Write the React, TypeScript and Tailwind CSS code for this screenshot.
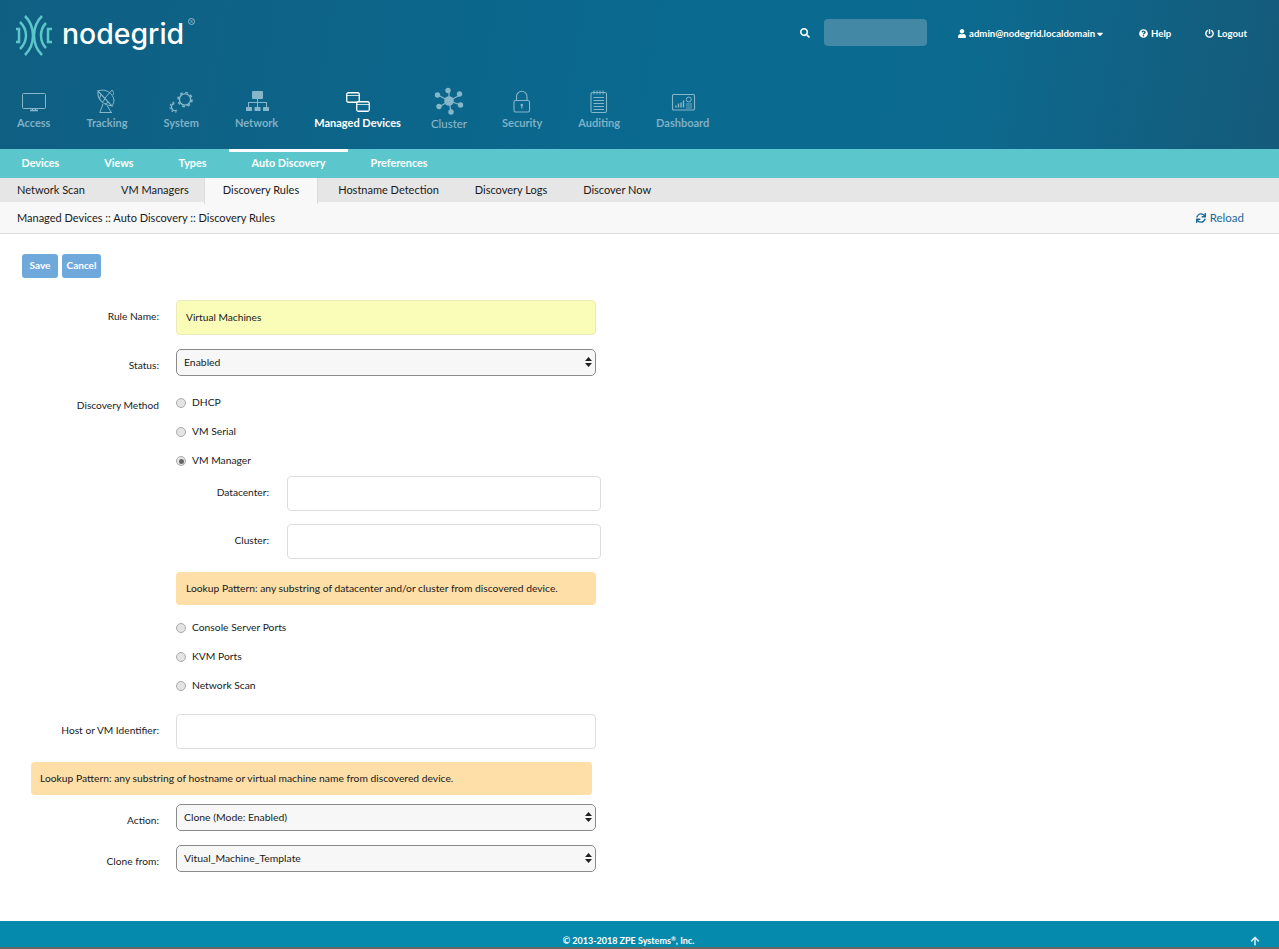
import { FaSearch, FaUser, FaQuestionCircle, FaPowerOff, FaCaretDown, FaSync, FaArrowUp } from 'react-icons/fa'

const navStroke = '#86b6c9'

function NavIcon({ name, active }: { name: string; active?: boolean }) {
  const c = active ? '#ffffff' : navStroke
  return (
    <svg width="30" height="28" viewBox="0 0 30 28" fill="none" stroke={c} strokeWidth="1">
      {name === 'Access' && (
        <>
          <rect x="3.5" y="6.5" width="23" height="15" rx="1" />
          <path d="M11 23.500h8M13.500 22v1M16.500 22v1" strokeWidth="1.400" />
        </>
      )}
      {name === 'Tracking' && (
        <>
          <path d="M6 4c-1 7 4 14 14 15L6 4z" strokeWidth="1.100" />
          <path d="M9 7.500l-1.500 4M13 12l-2.500 3M16 15.500l-3 1.500M13 11l7-8M20 3c1.500 1.500 2 3 1 5" />
          <path d="M6 4c7-3 15 2 16 9 0 3-2 6-2 6" />
          <path d="M11 17l-3 8M15 18.500l4 6.500M7.500 25.500h12.500" />
        </>
      )}
      {name === 'System' && (
        <>
          <circle cx="19" cy="12.500" r="5.600" strokeWidth="1.400" />
          <circle cx="19" cy="12.500" r="7" strokeWidth="1.600" strokeDasharray="2.800 2.700" />
          <circle cx="9" cy="20" r="3.500" strokeWidth="1.500" strokeDasharray="12 10" transform="rotate(60 9 20)" />
          <circle cx="9" cy="20" r="5" strokeWidth="1.200" strokeDasharray="1.800 1.800 1.800 1.800 1.800 1.800 1.800 1.800 1.800 20" transform="rotate(70 9 20)" />
        </>
      )}
      {name === 'Network' && (
        <g stroke="none" fill={c}>
          <rect x="10" y="4" width="11" height="8" rx="1" />
          <rect x="4" y="20" width="6" height="4" rx="0.500" />
          <rect x="12.500" y="20" width="6" height="4" rx="0.500" />
          <rect x="21" y="20" width="6" height="4" rx="0.500" />
          <path d="M15 12h1v3h9v5h-1v-4h-8v4h-1v-4H7v4H6v-5h9z" />
        </g>
      )}
      {name === 'Managed Devices' && (
        <>
          <rect x="3.750" y="5.750" width="12.500" height="9.500" rx="1.500" strokeWidth="1.300" />
          <path d="M3.750 8.500h12.500" strokeWidth="0.800" />
          <rect x="13.750" y="14.750" width="12.500" height="9.500" rx="1.500" strokeWidth="1.300" fill="#0c6a90" />
          <path d="M13.750 17.500h12.500" strokeWidth="0.800" />
        </>
      )}
      {name === 'Cluster' && (
        <g fill={c} stroke={c}>
          <path d="M15 14L15 3M15 14L26 8M15 14L27 18M15 14L17 25M15 14L5 20M15 14L4 8" strokeWidth="1.300" />
          <circle cx="15" cy="14" r="4.800" stroke="none" />
          <circle cx="14" cy="3.500" r="2.700" stroke="none" />
          <circle cx="25.500" cy="7" r="2.700" stroke="none" />
          <circle cx="26.500" cy="18" r="2.700" stroke="none" />
          <circle cx="17" cy="25" r="2.700" stroke="none" />
          <circle cx="5" cy="19.500" r="2.700" stroke="none" />
          <circle cx="3.500" cy="8" r="2.700" stroke="none" />
        </g>
      )}
      {name === 'Security' && (
        <>
          <rect x="7" y="13.500" width="15.500" height="11.500" rx="1.500" strokeWidth="1.100" />
          <path d="M9.500 13.500V9.500a5.250 5.250 0 0 1 10.500 0v4" strokeWidth="1.100" />
          <circle cx="14.800" cy="18" r="1.300" fill={c} stroke="none" />
          <path d="M14.800 18v3.500" strokeWidth="1.200" />
        </>
      )}
      {name === 'Auditing' && (
        <>
          <rect x="7" y="5.500" width="15.500" height="20" rx="1.500" strokeWidth="1.100" />
          <path d="M10 3.500v4M13 3.500v4M16 3.500v4M19 3.500v4" />
          <path d="M9.500 10.500h10.500M9.500 13.500h10.500M9.500 16.500h10.500M9.500 19.500h10.500M9.500 22.500h10.500" />
        </>
      )}
      {name === 'Dashboard' && (
        <>
          <rect x="4.500" y="7.500" width="22" height="15.500" rx="1" strokeWidth="1.100" />
          <path d="M8 20.500v-2M10.500 20.500v-4M13 20.500v-5M15.500 20.500v-7" strokeWidth="1.400" />
          <circle cx="20.800" cy="12.500" r="2.500" />
          <path d="M18 17h6M18 19h6M18 21h6" strokeWidth="0.800" />
        </>
      )}
    </svg>
  )
}

function Logo() {
  return (
    <div className="flex items-start">
      <svg width="38" height="41" viewBox="0 0 38 41" fill="none" stroke="#5cc6c9" strokeWidth="2.500">
        <path d="M1 14h3v13H1" />
        <path d="M10 1c5 5 8 12 8 19.500s-3 14.500-8 19.500" />
        <path d="M5 7c4 4 6 8 6 13.500S9 30 5 34" />
        <path d="M27 1c-5 5-8 12-8 19.500s3 14.500 8 19.500" />
        <path d="M31 8c-4 4-5 8-5 12.500S27 29 31 33" />
        <path d="M37 14h-4v13h4" />
      </svg>
      <span className="ml-[9px] font-['Inter',sans-serif] text-[28.400px] font-medium leading-[38px] text-white">nodegrid</span>
      <span className="ml-[4px] mt-[3px] flex h-[7px] w-[7px] items-center justify-center rounded-full border border-[#8fbccd] text-[4px] leading-none text-[#8fbccd]">R</span>
    </div>
  )
}

function TopBar() {
  return (
    <div className="flex h-[87px] items-start justify-between">
      <div className="pl-[15px] pt-[15px]">
        <Logo />
      </div>
      <div className="flex items-center pr-[32px] pt-[19px] text-white">
        <FaSearch className="mr-[14px] mt-[1px] h-[10px] w-[10px]" />
        <div className="mr-[31px] h-[27px] w-[103px] rounded-[4px] bg-[#4388a5]" />
        <div className="mt-[3px] flex items-center text-[9.600px] font-bold">
          <FaUser className="mr-[3px] h-[9px] w-[8px]" />
          <span>admin@nodegrid.localdomain</span>
          <FaCaretDown className="ml-[1px] h-[10px] w-[8px]" />
          <FaQuestionCircle className="ml-[35px] mr-[3px] h-[9px] w-[9px]" />
          <span>Help</span>
          <FaPowerOff className="ml-[34px] mr-[3px] h-[9px] w-[9px]" />
          <span>Logout</span>
        </div>
      </div>
    </div>
  )
}

const navItems = ['Access', 'Tracking', 'System', 'Network', 'Managed Devices', 'Cluster', 'Security', 'Auditing', 'Dashboard']

function NavItem({ item }: { item: string }) {
  if (item === 'Cluster') {
    return (
      <div className="-ml-[6px] -mr-[1px] flex flex-col items-center px-[18px] text-[11.500px] leading-[14px] text-[#8fbccd]">
        <NavIcon name={item} />
        <span className="mt-[2px]">{item}</span>
      </div>
    )
  }
  return (
    <div className={`flex flex-col items-center px-[18px] text-[11px] font-bold leading-[14px] ${item === 'Managed Devices' ? 'text-white' : 'text-[#7fb0c5]'}`}>
      <NavIcon name={item} active={item === 'Managed Devices'} />
      <span className="mt-[1px]">{item}</span>
    </div>
  )
}

function MainNav() {
  return (
    <div className="-ml-[1px] flex">
      {navItems.map((item) => (
        <NavItem key={item} item={item} />
      ))}
    </div>
  )
}

const subItems = ['Devices', 'Views', 'Types', 'Auto Discovery', 'Preferences']
const tabItems = ['Network Scan', 'VM Managers', 'Discovery Rules', 'Hostname Detection', 'Discovery Logs', 'Discover Now']

function SubNav() {
  return (
    <div className="flex h-[29px] bg-[#5bc7cc] pl-0">
      <div className="-ml-[1px] flex">
        {subItems.map((item) => (
          <div
            key={item}
            className={`flex items-center border-t-[3px] px-[22.500px] pb-[4px] text-[10.800px] font-bold text-white ${item === 'Auto Discovery' ? 'border-white' : 'border-transparent'}`}
          >
            {item}
          </div>
        ))}
      </div>
    </div>
  )
}

function Tabs() {
  return (
    <div className="flex h-[24px] bg-[#e6e6e6]">
      <div className="-ml-[1px] flex">
        {tabItems.map((item) => (
          <div
            key={item}
            className={
              item === 'Discovery Rules'
                ? 'relative z-10 -ml-[3px] mr-[2px] flex h-[26px] items-center border-x border-[#ddd] bg-[#f8f8f8] px-[18px] pb-[2px] text-[11px] text-[#1a1a1a]'
                : 'flex h-[26px] items-center border-x border-transparent px-[17px] pb-[2px] text-[11px] text-[#1a1a1a]'
            }
          >
            {item}
          </div>
        ))}
      </div>
    </div>
  )
}

function Breadcrumb() {
  return (
    <div className="flex h-[32px] items-center justify-between border-b border-[#dcdcdc] bg-[#f8f8f8] pl-[17px] pr-[35px] pt-[1px] text-[11px] text-[#1a1a1a]">
      <span>Managed Devices :: Auto Discovery :: Discovery Rules</span>
      <span className="flex items-center text-[11.500px] text-[#1a6a9a]">
        <FaSync className="mr-[4px] h-[10px] w-[10px]" />
        Reload
      </span>
    </div>
  )
}

function Row({ label, className, labelClass, children }: { label: string; className?: string; labelClass?: string; children: React.ReactNode }) {
  return (
    <div className={`flex ${className ?? ''}`}>
      <label className={`w-[159px] shrink-0 text-right text-[10.200px] leading-[14px] text-[#1a1a1a] ${labelClass ?? ''}`}>{label}</label>
      <div className="ml-[17px] w-[420px]">{children}</div>
    </div>
  )
}

function TextInput({ value, yellow }: { value?: string; yellow?: boolean }) {
  return (
    <input
      readOnly
      value={value ?? ''}
      className={`block h-[35px] w-full rounded-[4px] border px-[9px] pb-[1px] text-[10.200px] text-[#1a1a1a] ${yellow ? 'border-[#eee9b8] bg-[#f9fdb8]' : 'border-[#ddd] bg-white'}`}
    />
  )
}

function Select({ value }: { value: string }) {
  return (
    <div className="relative">
      <select className="block h-[27px] w-full appearance-none rounded-[5px] border border-[#8a8a8a] bg-[#f7f7f7] pl-[7px] text-[10.400px] text-[#1a1a1a]" defaultValue={value}>
        <option>{value}</option>
      </select>
      <svg className="absolute right-[4px] top-[8px]" width="7" height="10" viewBox="0 0 7 10" fill="#222">
        <path d="M3.500 0L7 4H0zM0 6h7L3.500 10z" />
      </svg>
    </div>
  )
}

function Radio({ label, checked, className }: { label: string; checked?: boolean; className?: string }) {
  return (
    <div className={`flex h-[14px] items-center text-[10.300px] text-[#1a1a1a] ${className ?? ''}`}>
      <span className="flex h-[10px] w-[10px] items-center justify-center rounded-full border border-[#aaa] bg-[#e4e4e4]">
        {checked && <span className="h-[5px] w-[5px] rounded-full bg-[#666]" />}
      </span>
      <span className="ml-[6px]">{label}</span>
    </div>
  )
}

function Notice({ text, className }: { text: string; className?: string }) {
  return <div className={`flex items-center rounded-[4px] bg-[#fedfa8] text-[10.300px] text-[#1a1a1a] ${className ?? ''}`}>{text}</div>
}

function SubField({ label, className }: { label: string; className?: string }) {
  return (
    <div className={`flex items-center ${className ?? ''}`}>
      <label className="w-[93px] shrink-0 pb-[2px] text-right text-[10.200px] text-[#1a1a1a]">{label}</label>
      <div className="ml-[18px] w-[314px] shrink-0">
        <TextInput />
      </div>
    </div>
  )
}

function Form() {
  return (
    <div className="flex-1 bg-white">
      <div className="flex gap-[4px] pl-[22px] pt-[20px]">
        <button className="h-[24px] w-[36px] rounded-[3px] bg-[#6fa9dc] pb-[1px] text-[10px] font-bold text-white">Save</button>
        <button className="h-[24px] w-[39px] rounded-[3px] bg-[#6fa9dc] pb-[1px] text-[10px] font-bold text-white">Cancel</button>
      </div>

      <Row label="Rule Name:" className="mt-[22px]" labelClass="pt-[9px]">
        <TextInput value="Virtual Machines" yellow />
      </Row>
      <Row label="Status:" className="mt-[14px]" labelClass="pt-[9px]">
        <Select value="Enabled" />
      </Row>
      <Row label="Discovery Method" className="mt-[23px]" labelClass="-mt-[1px]">
        <Radio label="DHCP" className="-mt-[3px]" />
        <Radio label="VM Serial" className="mt-[15px]" />
        <Radio label="VM Manager" checked className="mt-[15px]" />
        <SubField label="Datacenter:" className="mt-[8px]" />
        <SubField label="Cluster:" className="mt-[13px]" />
        <Notice text="Lookup Pattern: any substring of datacenter and/or cluster from discovered device." className="mt-[13px] h-[33px] pl-[10px]" />
        <Radio label="Console Server Ports" className="mt-[16px]" />
        <Radio label="KVM Ports" className="mt-[15px]" />
        <Radio label="Network Scan" className="mt-[15px]" />
      </Row>
      <Row label="Host or VM Identifier:" className="mt-[21px]" labelClass="pt-[9px]">
        <TextInput />
      </Row>
      <Notice text="Lookup Pattern: any substring of hostname or virtual machine name from discovered device." className="ml-[31px] mt-[13px] h-[33px] w-[561px] pl-[9px]" />
      <Row label="Action:" className="mt-[9px]" labelClass="pt-[9px]">
        <Select value="Clone (Mode: Enabled)" />
      </Row>
      <Row label="Clone from:" className="mt-[14px]" labelClass="pt-[9px]">
        <Select value="Vitual_Machine_Template" />
      </Row>
    </div>
  )
}

export default function App() {
  return (
    <div className="flex h-[949px] w-[1279px] flex-col overflow-hidden bg-white font-['Lato',sans-serif]">
      <div className="h-[149px] bg-[linear-gradient(100deg,#0f5f82_0%,#0a6a90_55%,#0c6a8f_75%,#155a7a_100%)]">
        <TopBar />
        <MainNav />
      </div>
      <SubNav />
      <Tabs />
      <Breadcrumb />
      <Form />
      <div className="relative flex h-[26px] items-end justify-center bg-[#058aad] pr-[22px] text-[9px] font-bold leading-[12px] text-white">
        <span>
          © 2013-2018 ZPE Systems<sup className="text-[6px]">®</sup>, Inc.
        </span>
        <FaArrowUp className="absolute bottom-[1px] right-[19px] h-[10px] w-[10px] text-[#d5eef3]" />
      </div>
      <div className="h-[2px] bg-[#666]" />
    </div>
  )
}
